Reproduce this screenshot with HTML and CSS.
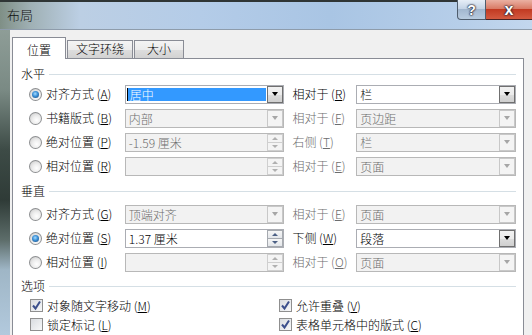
FILE: index.html
```html
<html>
<head>
    <title>布局</title>
    <link rel="stylesheet" href="styles.css">
</head>
<body>
    <div class="titlebar">
        <span class="title">布局</span>
        <div class="caption-btns">
            <span class="cap help">?</span>
            <span class="cap close">x</span>
        </div>
    </div>
    <div class="main">
        <div class="frame"></div>
        <div class="client">
            <div class="tabs">
                <span class="tab active">位置</span>
                <span class="tab wide">文字环绕</span>
                <span class="tab narrow">大小</span>
            </div>
            <div class="panel">
                <div class="group-title"><span>水平</span></div>
                <div class="row">
                    <span class="radio checked"></span>
                    <span class="label">对齐方式 (<u>A</u>)</span>
                    <div class="field"><span class="sel">居中</span><span class="drop"></span></div>
                    <span class="label2">相对于 (<u>R</u>)</span>
                    <div class="field"><span class="val">栏</span><span class="drop"></span></div>
                </div>
                <div class="row">
                    <span class="radio"></span>
                    <span class="label">书籍版式 (<u>B</u>)</span>
                    <div class="field off"><span class="val">内部</span><span class="drop"></span></div>
                    <span class="label2 off">相对于 (<u>F</u>)</span>
                    <div class="field off"><span class="val">页边距</span><span class="drop"></span></div>
                </div>
                <div class="row">
                    <span class="radio"></span>
                    <span class="label">绝对位置 (<u>P</u>)</span>
                    <div class="field off"><span class="val">-1.59 厘米</span><span class="spin"><i class="up"></i><i class="down"></i></span></div>
                    <span class="label2 off">右侧 (<u>T</u>)</span>
                    <div class="field off"><span class="val">栏</span><span class="drop"></span></div>
                </div>
                <div class="row">
                    <span class="radio"></span>
                    <span class="label">相对位置 (<u>R</u>)</span>
                    <div class="field off"><span class="val"></span><span class="spin"><i class="up"></i><i class="down"></i></span></div>
                    <span class="label2 off">相对于 (<u>E</u>)</span>
                    <div class="field off"><span class="val">页面</span><span class="drop"></span></div>
                </div>

                <div class="group-title second"><span>垂直</span></div>
                <div class="row">
                    <span class="radio"></span>
                    <span class="label">对齐方式 (<u>G</u>)</span>
                    <div class="field off"><span class="val">顶端对齐</span><span class="drop"></span></div>
                    <span class="label2 off">相对于 (<u>E</u>)</span>
                    <div class="field off"><span class="val">页面</span><span class="drop"></span></div>
                </div>
                <div class="row">
                    <span class="radio checked"></span>
                    <span class="label">绝对位置 (<u>S</u>)</span>
                    <div class="field"><span class="val">1.37 厘米</span><span class="spin"><i class="up"></i><i class="down"></i></span></div>
                    <span class="label2">下侧 (<u>W</u>)</span>
                    <div class="field"><span class="val">段落</span><span class="drop"></span></div>
                </div>
                <div class="row">
                    <span class="radio"></span>
                    <span class="label">相对位置 (<u>I</u>)</span>
                    <div class="field off"><span class="val"></span><span class="spin"><i class="up"></i><i class="down"></i></span></div>
                    <span class="label2 off">相对于 (<u>O</u>)</span>
                    <div class="field off"><span class="val">页面</span><span class="drop"></span></div>
                </div>

                <div class="group-title third"><span>选项</span></div>
                <div class="check-row">
                    <label class="option"><span class="box checked"><svg width="11" height="11" viewBox="0 0 11 11"><path d="M2 5.5l2.5 3L9 1.5" fill="none" stroke="#3b4f8c" stroke-width="2"/></svg></span>对象随文字移动 (<u>M</u>)</label>
                    <label class="option"><span class="box checked"><svg width="11" height="11" viewBox="0 0 11 11"><path d="M2 5.5l2.5 3L9 1.5" fill="none" stroke="#3b4f8c" stroke-width="2"/></svg></span>允许重叠 (<u>V</u>)</label>
                </div>
                <div class="check-row">
                    <label class="option"><span class="box"></span>锁定标记 (<u>L</u>)</label>
                    <label class="option"><span class="box checked"><svg width="11" height="11" viewBox="0 0 11 11"><path d="M2 5.5l2.5 3L9 1.5" fill="none" stroke="#3b4f8c" stroke-width="2"/></svg></span>表格单元格中的版式 (<u>C</u>)</label>
                </div>
            </div>
        </div>
    </div>
</body>
</html>
```

FILE: styles.css
```css
* {
    box-sizing: border-box;
}

body {
    margin: 0;
    width: 532px;
    height: 335px;
    overflow: hidden;
    font-family: "Noto Sans CJK SC", "Noto Sans", sans-serif;
    font-size: 12px;
    font-weight: 300;
    color: #000;
    background: #f0f0f0;
}

u {
    text-decoration: underline;
}

/* title bar */
.titlebar {
    height: 30px;
    display: flex;
    align-items: flex-start;
    border-top: 2px solid #2f3535;
    border-bottom: 1px solid #8e9cab;
    background: linear-gradient(to right, #7f8f86 0, #9fb0b4 30px, #bccfe4 80px, #b4cce8 200px, #a9c5e4 330px, #b6cee9 460px, #c3d7ee 532px);
}

.title {
    margin: 5px 0 0 7px;
    line-height: 16px;
    font-size: 13px;
    color: #111;
}

.caption-btns {
    display: flex;
    margin-left: auto;
    margin-top: -2px;
}

.cap {
    height: 20px;
    display: flex;
    align-items: center;
    justify-content: center;
    color: #fff;
    font-family: "Liberation Sans", sans-serif;
    font-weight: bold;
    text-shadow: 0 0 1px #223, 0 0 2px #223, 0 0 2px #223;
}

.help {
    width: 29px;
    font-size: 14px;
    border: 1px solid #4f5d6d;
    border-top: none;
    border-radius: 0 0 0 4px;
    background: linear-gradient(#e6eef7, #c4d4e6 45%, #a2b7cf 50%, #b9cce0 100%);
}

.close {
    width: 46px;
    font-size: 16px;
    border-bottom: 1px solid #4a2222;
    background: linear-gradient(#eab0a2, #d97b66 45%, #c23a22 50%, #d45a40 100%);
}

/* body */
.main {
    display: flex;
    height: 305px;
}

.frame {
    width: 10px;
    background: linear-gradient(#8e9d97 0, #7a8a84 60px, #3d4b46 120px, #2f3b37 170px, #5d6d6a 210px, #9fb6c6 240px, #b2c9dd 305px);
}

.client {
    flex: 1;
    padding: 7px 0 0 2px;
}

.tabs {
    display: flex;
    align-items: flex-end;
    height: 21px;
    position: relative;
    z-index: 1;
}

.tab {
    height: 18px;
    width: 66px;
    margin-left: 1px;
    border: 1px solid #898c95;
    border-bottom: none;
    text-align: center;
    line-height: 16px;
    background: linear-gradient(#f4f4f4, #ececec 50%, #dedede 51%, #d2d2d2);
}

.tab.narrow {
    width: 50px;
}

.tab.active {
    width: 54px;
    height: 22px;
    margin-left: 0;
    margin-bottom: -1px;
    padding-top: 2px;
    line-height: 20px;
    background: #fff;
}

.panel {
    width: 512px;
    height: 290px;
    border: 1px solid #898c95;
    background: #fff;
    padding: 7px 7px 0 0;
}

.group-title {
    display: flex;
    align-items: center;
    height: 16px;
    line-height: 16px;
    padding-left: 8px;
}

.group-title::after {
    content: "";
    flex: 1;
    height: 1px;
    margin-left: 4px;
    background: #d5dfe5;
}

.group-title.second {
    margin: 5px 0 3px;
}

.group-title.third {
    margin: 4px 0 2px;
}

.row {
    display: flex;
    align-items: center;
    height: 24px;
    padding-left: 16px;
}

.radio {
    width: 13px;
    height: 13px;
    border-radius: 50%;
    border: 1px solid #8d8f91;
    background: radial-gradient(circle at 60% 65%, #ffffff 0, #ececec 45%, #c6c6c6 100%);
    display: flex;
    align-items: center;
    justify-content: center;
}

.radio.checked::after {
    content: "";
    width: 7px;
    height: 7px;
    border-radius: 50%;
    background: radial-gradient(circle at 45% 40%, #a6dcff 0, #3a8fd6 45%, #163f6e 100%);
}

.label {
    width: 79px;
    margin-left: 4px;
    line-height: 16px;
    white-space: nowrap;
}

.label2 {
    width: 64px;
    margin-left: 8px;
    line-height: 16px;
    white-space: nowrap;
}

.off {
    color: #6d6d6d;
}

.field {
    width: 160px;
    height: 19px;
    display: flex;
    align-items: center;
    border: 1px solid #abadb3;
    background: #fff;
}

.field.off {
    border-color: #b8b8b8;
    background: #f2f2f2;
}

.val {
    flex: 1;
    padding-left: 3px;
    line-height: 17px;
    white-space: nowrap;
}

.sel {
    flex: 1;
    height: 13px;
    line-height: 13px;
    margin: 0 1px 0 1px;
    padding-left: 2px;
    border-left: 1px solid #000;
    background: #3399ff;
    color: #fff;
}

.drop {
    width: 16px;
    height: 17px;
    display: flex;
    align-items: center;
    justify-content: center;
    border: 1px solid #707070;
    background: linear-gradient(#f2f2f2, #ebebeb 50%, #dddddd 51%, #cfcfcf);
}

.drop::after {
    content: "";
    border-left: 3.5px solid transparent;
    border-right: 3.5px solid transparent;
    border-top: 4px solid #000;
}

.off .drop {
    border-color: #c8c8c8;
    background: #f4f4f4;
}

.off .drop::after {
    border-top-color: #a6a6a6;
}

.spin {
    width: 16px;
    height: 17px;
    display: flex;
    flex-direction: column;
}

.spin i {
    flex: 1;
    display: flex;
    align-items: center;
    justify-content: center;
    border: 1px solid #a6aab0;
    background: linear-gradient(#f6f6f6, #e3e6ea);
}

.spin i + i {
    border-top: none;
}

.spin .up::after {
    content: "";
    border-left: 3px solid transparent;
    border-right: 3px solid transparent;
    border-bottom: 3px solid #4d6185;
}

.spin .down::after {
    content: "";
    border-left: 3px solid transparent;
    border-right: 3px solid transparent;
    border-top: 3px solid #4d6185;
}

.off .spin i {
    border-color: #cfcfcf;
    background: #f4f4f4;
}

.off .spin .up::after {
    border-bottom-color: #b0b0b0;
}

.off .spin .down::after {
    border-top-color: #b0b0b0;
}

/* options */
.check-row {
    display: flex;
    align-items: center;
    height: 19px;
    padding-left: 17px;
}

.option {
    display: flex;
    align-items: center;
    line-height: 16px;
}

.option:first-child {
    width: 249px;
}

.box {
    width: 13px;
    height: 13px;
    margin-right: 4px;
    border: 1px solid #8f8f8f;
    background: linear-gradient(135deg, #d9dce0, #f7f8f9);
    display: flex;
    align-items: center;
    justify-content: center;
}
```
